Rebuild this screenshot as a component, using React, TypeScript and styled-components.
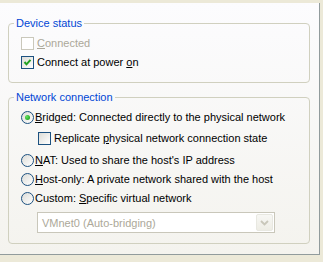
import React from "react"
import styled, { createGlobalStyle } from "styled-components"

const GlobalStyle = createGlobalStyle`
  html, body {
    margin: 0;
    padding: 0;
    background: #ece9d8;
  }
  body {
    font-family: "Liberation Sans", Arial, sans-serif;
    font-size: 11px;
  }
`

const Frame = styled.div`
  width: 323px;
  height: 262px;
  box-sizing: border-box;
  padding-top: 3px;
  background: #ece9d8;
`

const Page = styled.div`
  width: 320px;
  height: 252px;
  box-sizing: border-box;
  border-right: 1px solid #919b9c;
  border-bottom: 1px solid #919b9c;
  background: linear-gradient(to bottom, #fcfcfe, #f4f3ee);
  padding: 14px 0 0 8px;
  display: flex;
  flex-direction: column;
  gap: 8px;
`

const Group = styled.fieldset`
  margin: 0;
  padding: 0;
  width: 302px;
  box-sizing: border-box;
  border: 1px solid #d0d0bf;
  border-radius: 4px;
  min-width: 0;
`

const Legend = styled.legend`
  margin-left: 5px;
  padding: 0 2px;
  line-height: 13px;
  color: #0046d5;
`

const GroupBody = styled.div<{ $top: number; $bottom: number }>`
  display: flex;
  flex-direction: column;
  padding: ${p => p.$top}px 0 ${p => p.$bottom}px 12px;
`

const Row = styled.label<{ $indent?: number; $h?: number }>`
  display: flex;
  align-items: center;
  height: ${p => p.$h ?? 19}px;
  padding-left: ${p => p.$indent ?? 0}px;
  color: #000;
  white-space: nowrap;
`

const Text = styled.span<{ $disabled?: boolean; $gap: number }>`
  margin-left: ${p => p.$gap}px;
  color: ${p => (p.$disabled ? "#aca899" : "#000")};
  line-height: 13px;
`

const Box = styled.span<{ $disabled?: boolean }>`
  flex: none;
  width: 13px;
  height: 13px;
  box-sizing: border-box;
  border: 1px solid ${p => (p.$disabled ? "#cac8bb" : "#1c5180")};
  background: ${p =>
    p.$disabled ? "#ffffff" : "linear-gradient(135deg, #dcdcd7 0%, #ffffff 100%)"};
  display: flex;
  align-items: center;
  justify-content: center;
`

const Radio = styled.span`
  flex: none;
  width: 13px;
  height: 13px;
  box-sizing: border-box;
  border-radius: 50%;
  border: 1px solid #1c5180;
  background: linear-gradient(135deg, #dcdcd7 0%, #ffffff 100%);
  display: flex;
  align-items: center;
  justify-content: center;
`

const Dot = styled.span`
  width: 5px;
  height: 5px;
  border-radius: 50%;
  background: radial-gradient(circle at 35% 35%, #62e45f 0%, #21a121 80%);
`

const Combo = styled.div`
  margin: 4px 0 0 16px;
  width: 238px;
  height: 21px;
  box-sizing: border-box;
  border: 1px solid #c9c7ba;
  background: #ffffff;
  display: flex;
  align-items: center;
  padding: 1px;
`

const ComboText = styled.span`
  flex: 1;
  padding-left: 3px;
  color: #aca899;
`

const DropButton = styled.span`
  width: 17px;
  height: 17px;
  box-sizing: border-box;
  border: 1px solid #e8e8e1;
  border-radius: 2px;
  background: linear-gradient(to bottom, #f7f7f4, #eeede5);
  display: flex;
  align-items: center;
  justify-content: center;
`

const Check = () => (
  <svg width="9" height="9" viewBox="0 0 9 9">
    <polyline points="1.5,4 3.5,6.3 7.5,1.8" fill="none" stroke="#21a121" strokeWidth="2" />
  </svg>
)

const Chevron = () => (
  <svg width="9" height="6" viewBox="0 0 9 6">
    <polyline points="1,1 4.5,4.5 8,1" fill="none" stroke="#c9c7ba" strokeWidth="1.8" />
  </svg>
)

const CheckRow = ({ checked, disabled, indent, h, children }: any) => (
  <Row $indent={indent} $h={h}>
    <Box $disabled={disabled}>{checked && <Check />}</Box>
    <Text $gap={3} $disabled={disabled}>{children}</Text>
  </Row>
)

const RadioRow = ({ selected, h, children }: any) => (
  <Row $h={h}>
    <Radio>{selected && <Dot />}</Radio>
    <Text $gap={1}>{children}</Text>
  </Row>
)

export default function App() {
  return (
    <Frame>
      <GlobalStyle />
      <Page>
        <Group>
          <Legend>Device status</Legend>
          <GroupBody $top={4} $bottom={10}>
            <CheckRow disabled>
              <u>C</u>onnected
            </CheckRow>
            <CheckRow checked>
              Connect at power <u>o</u>n
            </CheckRow>
          </GroupBody>
        </Group>
        <Group>
          <Legend>Network connection</Legend>
          <GroupBody $top={3} $bottom={10}>
            <RadioRow selected h={20}>
              <u>B</u>ridged: Connected directly to the physical network
            </RadioRow>
            <CheckRow indent={17} h={23}>
              Replicate <u>p</u>hysical network connection state
            </CheckRow>
            <RadioRow h={20}>
              <u>N</u>AT: Used to share the host's IP address
            </RadioRow>
            <RadioRow h={19}>
              <u>H</u>ost-only: A private network shared with the host
            </RadioRow>
            <RadioRow h={19}>
              Custom: <u>S</u>pecific virtual network
            </RadioRow>
            <Combo>
              <ComboText>VMnet0 (Auto-bridging)</ComboText>
              <DropButton>
                <Chevron />
              </DropButton>
            </Combo>
          </GroupBody>
        </Group>
      </Page>
    </Frame>
  )
}
